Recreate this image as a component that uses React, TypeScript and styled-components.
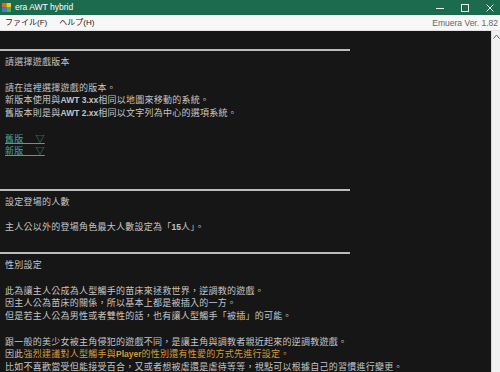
import styled, { createGlobalStyle } from 'styled-components';

const GlobalStyle = createGlobalStyle`
  html, body {
    margin: 0;
    padding: 0;
    background: #161616;
  }
  body {
    width: 500px;
    height: 372px;
    overflow: hidden;
    font-family: "Liberation Sans", "Noto Sans CJK TC", sans-serif;
  }
`;

type Seg = { text: string; tone?: 'warn' };
type Line =
  | { kind: 'blank' }
  | { kind: 'rule' }
  | { kind: 'text'; segs: Seg[] }
  | { kind: 'link'; label: string };

const t = (text: string): Line => ({ kind: 'text', segs: [{ text }] });
const blank: Line = { kind: 'blank' };
const rule: Line = { kind: 'rule' };

const LINES: Line[] = [
  blank,
  rule,
  t('請選擇遊戲版本'),
  blank,
  t('請在這裡選擇遊戲的版本。'),
  t('新版本使用與AWT 3.xx相同以地圖來移動的系統。'),
  t('舊版本則是與AWT 2.xx相同以文字列為中心的選項系統。'),
  blank,
  { kind: 'link', label: '舊版' },
  { kind: 'link', label: '新版' },
  blank,
  blank,
  rule,
  t('設定登場的人數'),
  blank,
  t('主人公以外的登場角色最大人數設定為「15人」。'),
  blank,
  rule,
  t('性別設定'),
  blank,
  t('此為讓主人公成為人型觸手的苗床來拯救世界，逆調教的遊戲。'),
  t('因主人公為苗床的關係，所以基本上都是被插入的一方。'),
  t('但是若主人公為男性或者雙性的話，也有讓人型觸手「被插」的可能。'),
  blank,
  t('跟一般的美少女被主角侵犯的遊戲不同，是讓主角與調教者親近起來的逆調教遊戲。'),
  {
    kind: 'text',
    segs: [
      { text: '因此' },
      { text: '強烈建議對人型觸手與Player的性別還有性愛的方式先進行設定。', tone: 'warn' },
    ],
  },
  t('比如不喜歡當受但能接受百合，又或者想被虐還是虐待等等，視點可以根據自己的習慣進行變更。'),
];

// latin runs (AWT 3.xx, 15, Player) are drawn in a bold sans in the console
const LATIN = /([A-Za-z0-9][A-Za-z0-9. ]*[A-Za-z0-9]|[0-9])/;

const renderRuns = (text: string) =>
  text.split(LATIN).map((part, k) =>
    k % 2 === 1 ? <Latin key={k}>{part}</Latin> : part
  );

const AppIcon = () => (
  <svg width="9" height="9" viewBox="0 0 9 9">
    <rect x="0" y="0" width="4.5" height="4.5" fill="#e5622b" />
    <rect x="4.5" y="0" width="4.5" height="4.5" fill="#f3c03f" />
    <rect x="0" y="4.5" width="4.5" height="4.5" fill="#3b7fd6" />
    <rect x="4.5" y="4.5" width="4.5" height="4.5" fill="#52b04f" />
  </svg>
);

const WindowControls = () => (
  <Controls>
    <svg width="10" height="10" viewBox="0 0 10 10">
      <line x1="1" y1="5.5" x2="9" y2="5.5" stroke="#e8f0ec" strokeWidth="1" />
    </svg>
    <svg width="10" height="10" viewBox="0 0 10 10">
      <rect x="1.5" y="1.5" width="7" height="7" fill="none" stroke="#e8f0ec" strokeWidth="1" />
    </svg>
    <svg width="10" height="10" viewBox="0 0 10 10">
      <path d="M1.5 1.5 L8.5 8.5 M8.5 1.5 L1.5 8.5" stroke="#e8f0ec" strokeWidth="1" />
    </svg>
  </Controls>
);

const App = () => {
  return (
    <Window>
      <GlobalStyle />
      <TitleBar>
        <AppIcon />
        <Title>era AWT hybrid</Title>
        <WindowControls />
      </TitleBar>
      <MenuBar>
        <MenuItem>ファイル(F)</MenuItem>
        <MenuItem>ヘルプ(H)</MenuItem>
        <Version>Emuera Ver. 1.82</Version>
      </MenuBar>
      <Body>
        <Console>
          {LINES.map((line, i) => {
            if (line.kind === 'blank') return <Row key={i} />;
            if (line.kind === 'rule') return <RuleRow key={i} />;
            if (line.kind === 'link')
              return (
                <Row key={i}>
                  <LinkText>{line.label + '　 ▽'}</LinkText>
                </Row>
              );
            return (
              <Row key={i}>
                {line.segs.map((s, j) => (
                  <Segment key={j} $tone={s.tone}>
                    {renderRuns(s.text)}
                  </Segment>
                ))}
              </Row>
            );
          })}
        </Console>
        <ScrollTrack>
          <ScrollArrow>
            <svg width="7" height="5" viewBox="0 0 7 5">
              <path d="M0.5 4.5 L3.5 1 L6.5 4.5" fill="none" stroke="#606060" strokeWidth="1" />
            </svg>
          </ScrollArrow>
        </ScrollTrack>
      </Body>
    </Window>
  );
};

export default App;

const Window = styled.div`
  display: flex;
  flex-direction: column;
  width: 500px;
  height: 372px;
  overflow: hidden;
  background: #161616;
`;

const TitleBar = styled.div`
  display: flex;
  align-items: center;
  gap: 4px;
  height: 15px;
  padding-left: 2px;
  background: #1d6b4f;
  color: #ffffff;
`;

const Title = styled.span`
  font-size: 8.5px;
  line-height: 15px;
  flex: 1;
`;

const Controls = styled.div`
  display: flex;
  align-items: center;
  gap: 15px;
  padding-right: 5px;
`;

const MenuBar = styled.div`
  display: flex;
  align-items: center;
  gap: 12px;
  height: 15px;
  padding-left: 5px;
  background: #f7f7f7;
  border-bottom: 1px solid #e2e2e2;
`;

const MenuItem = styled.span`
  font-size: 8px;
  color: #222222;
  line-height: 15px;
`;

const Version = styled.span`
  margin-left: auto;
  margin-right: 2px;
  font-size: 8.5px;
  color: #666666;
  white-space: nowrap;
`;

const Body = styled.div`
  display: flex;
  flex: 1;
  min-height: 0;
`;

const Console = styled.div`
  flex: 1;
  display: flex;
  flex-direction: column;
  background: #161616;
  overflow: hidden;
`;

const Row = styled.div`
  height: 12.7px;
  flex-shrink: 0;
  padding-left: 5px;
  font-size: 9px;
  letter-spacing: 0.25px;
  line-height: 12.7px;
  color: #c4c4c4;
  white-space: nowrap;
`;

const RuleRow = styled.div`
  height: 12.7px;
  flex-shrink: 0;
  display: flex;
  align-items: center;
  &::before {
    content: '';
    width: 350px;
    height: 2px;
    background: #bcbcbc;
  }
`;

const Segment = styled.span<{ $tone?: 'warn' }>`
  color: ${(p) => (p.$tone === 'warn' ? '#d39a3a' : '#c4c4c4')};
`;

const Latin = styled.span`
  font-weight: 700;
  font-size: 8.5px;
  letter-spacing: 0;
`;

const LinkText = styled.span`
  color: #4f9e93;
  text-decoration: underline;
  text-underline-offset: 1px;
  white-space: pre;
`;

const ScrollTrack = styled.div`
  width: 8px;
  background: #f0f0f0;
  border-left: 1px solid #d8d8d8;
  display: flex;
  flex-direction: column;
  align-items: center;
`;

const ScrollArrow = styled.div`
  margin-top: 3px;
  display: flex;
`;
